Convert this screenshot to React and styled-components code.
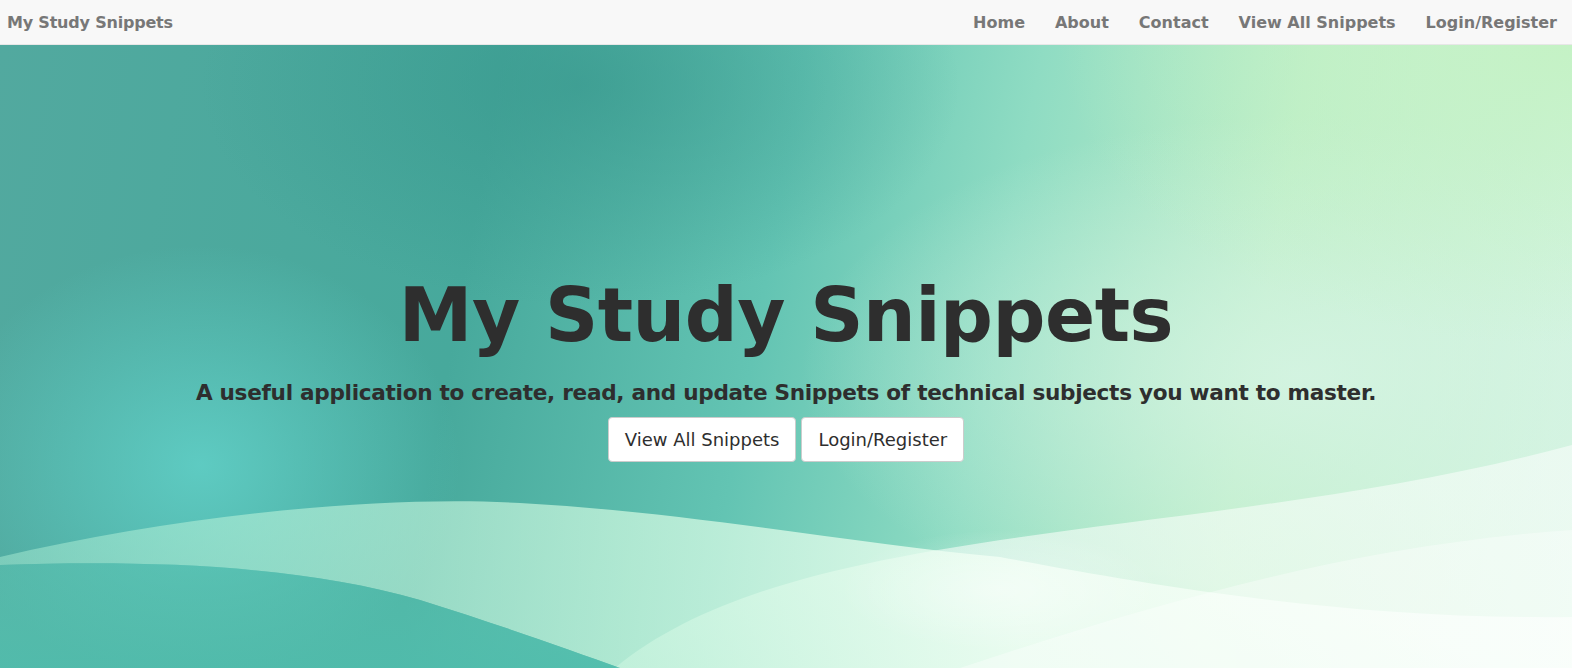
import styled, { createGlobalStyle } from "styled-components"

const GlobalStyle = createGlobalStyle`
    * { box-sizing: border-box; }
    html, body {
        margin: 0;
        padding: 0;
        height: 100%;
    }
    body {
        font-family: "DejaVu Sans", "Noto Sans", sans-serif;
        overflow: hidden;
    }
`

const links = ["Home", "About", "Contact", "View All Snippets", "Login/Register"]

function HeroWaves(){
    return(
        <Waves viewBox="0 0 1572 623" preserveAspectRatio="none">
            <defs>
                <linearGradient id="band" x1="0" y1="0" x2="1" y2="0">
                    <stop offset="0" stopColor="#a8ecd3" stopOpacity="0.5"/>
                    <stop offset="0.4" stopColor="#d4fbe2" stopOpacity="0.7"/>
                    <stop offset="0.65" stopColor="#f2fff4" stopOpacity="0.8"/>
                    <stop offset="1" stopColor="#ffffff" stopOpacity="0.6"/>
                </linearGradient>
                <linearGradient id="hill" x1="0" y1="0" x2="0" y2="1">
                    <stop offset="0" stopColor="#5cc7b4" stopOpacity="0.45"/>
                    <stop offset="1" stopColor="#52bfae" stopOpacity="0.8"/>
                </linearGradient>
                <linearGradient id="light" x1="0" y1="1" x2="1" y2="0">
                    <stop offset="0" stopColor="#d9f6ec" stopOpacity="0.6"/>
                    <stop offset="0.5" stopColor="#f4fdf6" stopOpacity="0.85"/>
                    <stop offset="1" stopColor="#ffffff" stopOpacity="0.7"/>
                </linearGradient>
                <radialGradient id="glow" cx="0.5" cy="0.5" r="0.5">
                    <stop offset="0" stopColor="#ffffff" stopOpacity="0.7"/>
                    <stop offset="1" stopColor="#ffffff" stopOpacity="0"/>
                </radialGradient>
            </defs>
            {/* light region bottom right */}
            <path d="M615 623 C 800 470, 1200 500, 1572 400 L1572 623 Z" fill="url(#light)" opacity="0.75"/>
            {/* the bright band */}
            <path d="M0 512 C 180 470, 380 450, 520 458 C 700 468, 860 500, 1000 512 C 1150 540, 1350 575, 1572 572 L1572 623 L620 623 C 570 605, 500 580, 420 555 C 300 520, 150 515, 0 520 Z" fill="url(#band)"/>
            {/* teal hill bottom left */}
            <path d="M0 520 C 150 515, 300 520, 420 555 C 500 580, 570 605, 620 623 L0 623 Z" fill="url(#hill)"/>
            <path d="M960 623 C 1150 560, 1350 500, 1572 485 L1572 623 Z" fill="#ffffff" opacity="0.35"/>
            <ellipse cx="1000" cy="545" rx="160" ry="60" fill="url(#glow)" opacity="0.6"/>
        </Waves>
    )
}

export default function App(){
    return(
        <Page>
            <GlobalStyle/>
            <NavBar>
                <Brand href="#">My Study Snippets</Brand>
                <NavList>
                    {links.map(l => (
                        <NavItem key={l}><a href="#">{l}</a></NavItem>
                    ))}
                </NavList>
            </NavBar>
            <Hero>
                <HeroWaves/>
                <HeroContent>
                    <Title>My Study Snippets</Title>
                    <Lead>A useful application to create, read, and update Snippets of technical subjects you want to master.</Lead>
                    <ButtonRow>
                        <Button>View All Snippets</Button>
                        <Button>Login/Register</Button>
                    </ButtonRow>
                </HeroContent>
            </Hero>
        </Page>
    )
}

const Page = styled.div`
    display: flex;
    flex-direction: column;
    width: 100%;
    height: 100vh;
`

const NavBar = styled.nav`
    display: flex;
    justify-content: space-between;
    align-items: center;
    height: 45px;
    flex-shrink: 0;
    background-color: #f8f8f8;
    border-bottom: 1px solid #e7e7e7;
    padding: 0 0 0 7px;
`

const Brand = styled.a`
    color: #777;
    font-size: 16px;
    font-weight: 700;
    text-decoration: none;
    letter-spacing: -0.2px;
`

const NavList = styled.ul`
    display: flex;
    list-style: none;
    margin: 0;
    padding: 0;
`

const NavItem = styled.li`
    a{
        display: block;
        padding: 12px 15px;
        color: #777;
        font-size: 16px;
        font-weight: 700;
        text-decoration: none;
    }
`

const Hero = styled.section`
    position: relative;
    flex: 1;
    display: flex;
    align-items: center;
    justify-content: center;
    overflow: hidden;
    background:
        radial-gradient(ellipse 260px 220px at 200px 420px, rgba(100, 214, 206, 0.75), rgba(100, 214, 206, 0) 100%),
        radial-gradient(ellipse 380px 220px at 580px 40px, rgba(55, 150, 140, 0.65), rgba(55, 150, 140, 0) 100%),
        radial-gradient(ellipse 500px 300px at 1560px 0px, rgba(196, 242, 196, 0.95), rgba(196, 242, 196, 0) 100%),
        radial-gradient(ellipse 500px 260px at 1300px 330px, rgba(214, 244, 228, 0.85), rgba(214, 244, 228, 0) 100%),
        linear-gradient(100deg, #52a99f 0%, #47a99c 30%, #63c4b3 48%, #8fdcc3 62%, #bdeec8 78%, #d6f4e4 100%);
`

const Waves = styled.svg`
    position: absolute;
    inset: 0;
    width: 100%;
    height: 100%;
    z-index: 0;
`

const HeroContent = styled.div`
    position: relative;
    z-index: 1;
    display: flex;
    flex-direction: column;
    align-items: center;
    margin-top: 24px;
    color: #2e2e2e;
`

const Title = styled.h1`
    margin: 0;
    font-size: 74px;
    font-weight: 700;
    line-height: 1.1;
    letter-spacing: -0.5px;
`

const Lead = styled.p`
    margin: 24px 0 12px;
    font-size: 21.6px;
    font-weight: 700;
    letter-spacing: -0.3px;
`

const ButtonRow = styled.div`
    display: flex;
    gap: 5px;
`

const Button = styled.button`
    height: 45px;
    padding: 0 16px;
    background-color: #fff;
    color: #2e2e2e;
    border: 1px solid #ccc;
    border-radius: 4px;
    font-family: inherit;
    font-size: 18px;
    cursor: pointer;
`
